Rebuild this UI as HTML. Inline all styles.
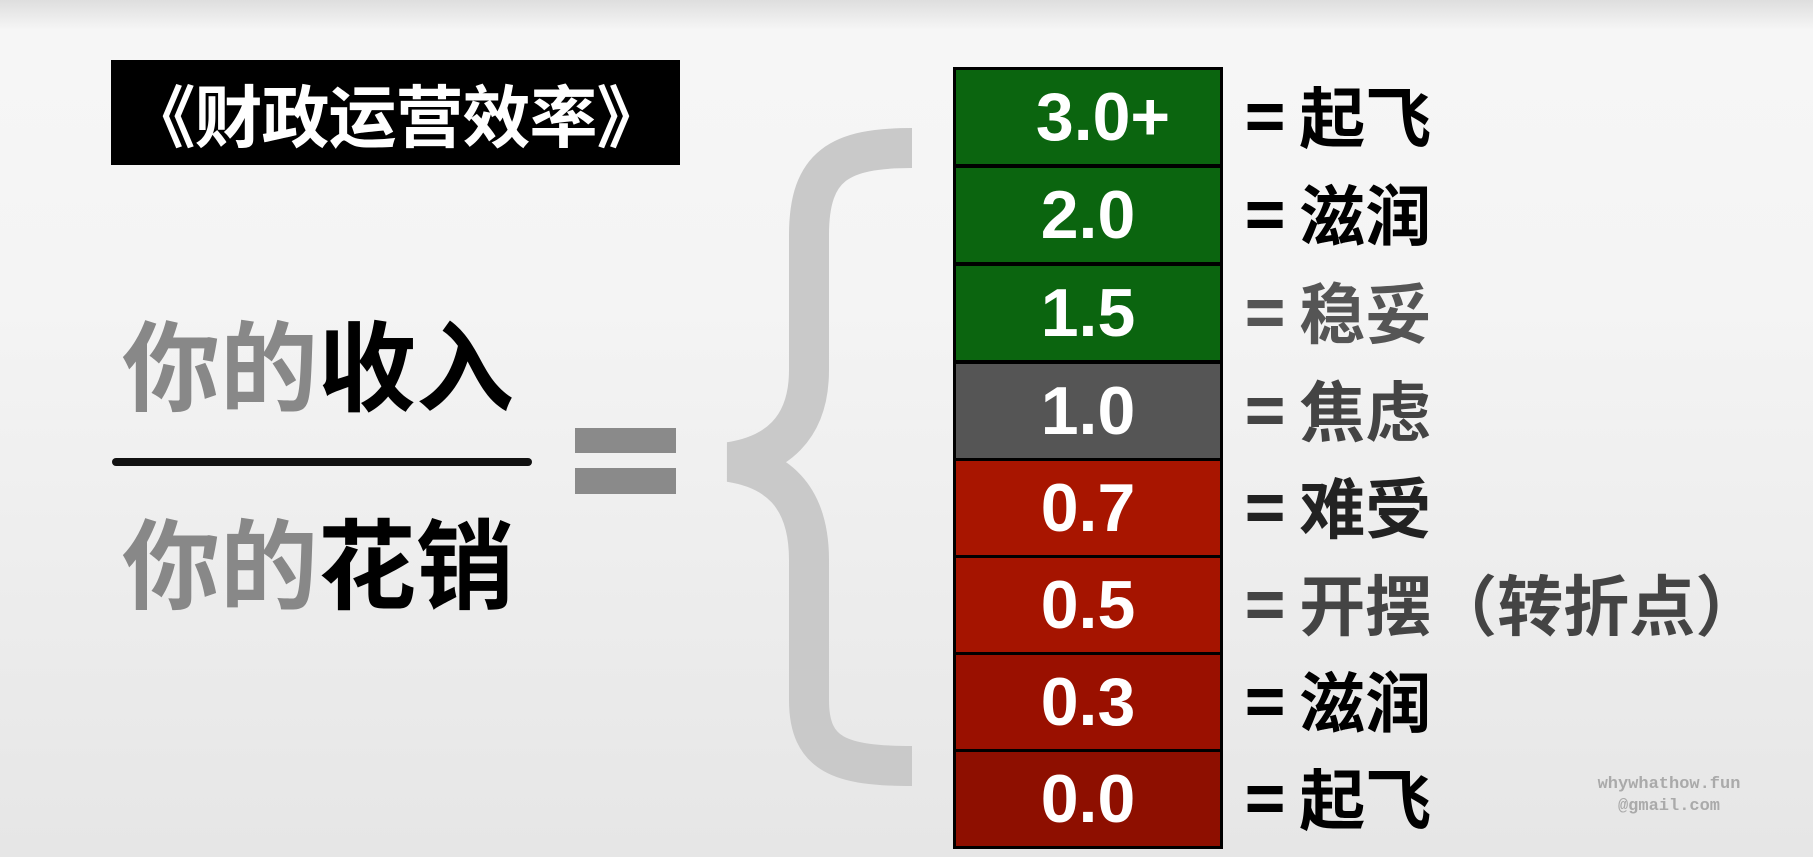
<!DOCTYPE html>
<html><head><meta charset="utf-8"><style>
body{margin:0;width:1813px;height:857px;overflow:hidden;background:linear-gradient(#dedede 0px,#f6f6f6 30px,#f4f4f4 300px,#e6e6e6 857px);font-family:"Liberation Sans","Noto Sans CJK SC",sans-serif;position:relative}
.a{position:absolute}
.title{left:111px;top:60px;width:569px;height:105px;background:#000;color:#fff;font-size:68px;font-weight:bold;line-height:105px;text-align:center;font-family:"Noto Sans CJK SC",sans-serif;letter-spacing:-1px}
.big{font-size:98px;font-weight:bold;left:122px;font-family:"Noto Sans CJK SC",sans-serif;line-height:1}
.g{color:#888}
.box{position:absolute;left:953px;width:264px;height:94px;border:3px solid #000;color:#fff;font-weight:bold;font-size:68px;text-align:center;line-height:94px}
.lab{position:absolute;left:1245px;font-size:66px;font-weight:bold;font-family:"Noto Sans CJK SC",sans-serif;line-height:100px;top:-3px}
.lab b{margin-right:14px}
</style></head><body>
<div class="a title">《财政运营效率》</div>
<div class="a big" style="top:312px"><span class="g">你的</span>收入</div>
<div class="a" style="left:112px;top:458px;width:420px;height:8px;background:#111;border-radius:4px"></div>
<div class="a big" style="top:510px"><span class="g">你的</span>花销</div>
<div class="a" style="left:575px;top:428px;width:101px;height:25px;background:#8a8a8a"></div>
<div class="a" style="left:575px;top:468px;width:101px;height:26px;background:#8a8a8a"></div>
<svg class="a" style="left:0;top:0" width="1813" height="857"><path d="M912,148 C840,148 809,165 809,235 L809,370 C809,430 775,455 730,462 C775,469 809,494 809,560 L809,700 C809,755 840,766 912,766" fill="none" stroke="#c9c9c9" stroke-width="40"/></svg>
<div class="box" style="top:67px;background:#0b650f;padding-left:30px;width:234px">3.0+</div>
<div class="box" style="top:165px;background:#0b650f">2.0</div>
<div class="box" style="top:263px;background:#0b650f">1.5</div>
<div class="box" style="top:361px;background:#555">1.0</div>
<div class="box" style="top:458px;background:#a81500">0.7</div>
<div class="box" style="top:555px;background:#a51400">0.5</div>
<div class="box" style="top:652px;background:#9a1000">0.3</div>
<div class="box" style="top:749px;background:#8e0f00">0.0</div>
<div class="lab" style="margin-top:67px;color:#000"><b>=</b>起飞</div>
<div class="lab" style="margin-top:165px;color:#000"><b>=</b>滋润</div>
<div class="lab" style="margin-top:263px;color:#555"><b>=</b>稳妥</div>
<div class="lab" style="margin-top:361px;color:#444"><b>=</b>焦虑</div>
<div class="lab" style="margin-top:458px;color:#222"><b>=</b>难受</div>
<div class="lab" style="margin-top:555px;color:#444"><b>=</b>开摆（转折点）</div>
<div class="lab" style="margin-top:652px;color:#000"><b>=</b>滋润</div>
<div class="lab" style="margin-top:749px;color:#000"><b>=</b>起飞</div>
<div class="a" style="left:1588px;top:774px;width:162px;text-align:center;color:#aaa;font-size:17px;font-weight:bold;line-height:22px;font-family:'Liberation Mono',monospace">whywhathow.fun<br>@gmail.com</div>
</body></html>
